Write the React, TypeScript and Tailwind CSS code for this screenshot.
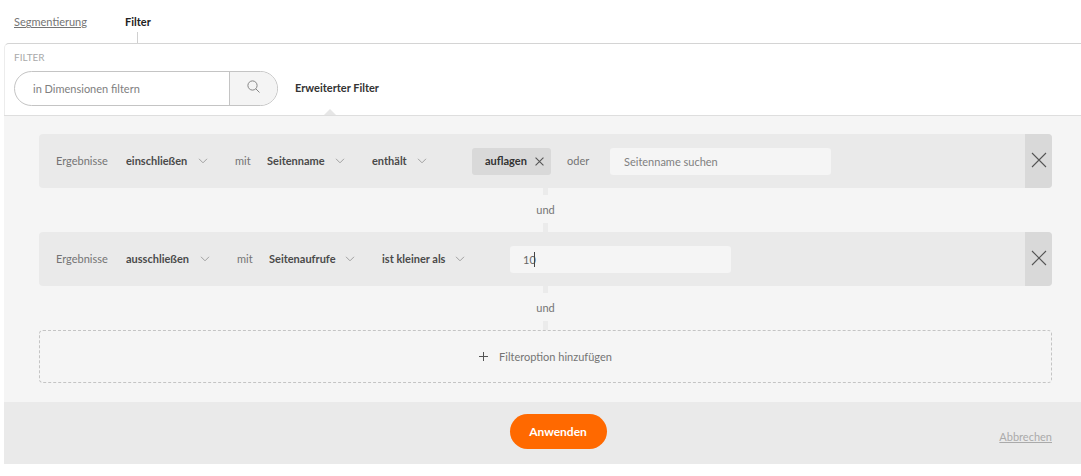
import { useState } from "react";

type Rule = {
	mode: string;
	modeWidth: string;
	dimension: string;
	dimensionWidth: string;
	operator: string;
	operatorWidth: string;
};

const includeRule: Rule = {
	mode: "einschließen",
	modeWidth: "w-[82px]",
	dimension: "Seitenname",
	dimensionWidth: "w-[78px]",
	operator: "enthält",
	operatorWidth: "w-[55px]",
};

const excludeRule: Rule = {
	mode: "ausschließen",
	modeWidth: "w-[84px]",
	dimension: "Seitenaufrufe",
	dimensionWidth: "w-[86px]",
	operator: "ist kleiner als",
	operatorWidth: "w-[83px]",
};

const Cross = ({ className }: { className: string }) => (
	<svg viewBox="0 0 16 16" fill="none" stroke="currentColor" className={className} aria-hidden="true">
		<path d="M1 1l14 14M15 1L1 15" strokeWidth="1.1" vectorEffect="non-scaling-stroke" />
	</svg>
);

const Dropdown = ({ label, value, width }: { label: string; value: string; width: string }) => (
	<div className={`relative shrink-0 ${width}`}>
		<select
			aria-label={label}
			className="block w-full appearance-none bg-transparent font-bold text-[#4a4a4a] outline-none"
		>
			<option>{value}</option>
		</select>
		<svg
			viewBox="0 0 10 6"
			fill="none"
			stroke="#a0a0a0"
			className="pointer-events-none absolute right-0 top-1/2 h-[6px] w-[10px] -translate-y-1/2"
			aria-hidden="true"
		>
			<path d="M1 0.8l4 4 4-4" />
		</svg>
	</div>
);

const RuleRow = ({ rule, children }: { rule: Rule; children: React.ReactNode }) => (
	<div className="flex h-[54px] overflow-hidden rounded-[4px] bg-[#eaeaea]">
		<div className="flex min-w-0 flex-1 items-center pl-[17px]">
			<span className="w-[70px] shrink-0">Ergebnisse</span>
			<Dropdown label="Modus" value={rule.mode} width={rule.modeWidth} />
			<span className="ml-[27px] w-8 shrink-0">mit</span>
			<Dropdown label="Dimension" value={rule.dimension} width={rule.dimensionWidth} />
			<div className="w-[27px] shrink-0" />
			<Dropdown label="Operator" value={rule.operator} width={rule.operatorWidth} />
			<div className="ml-[45px] flex min-w-0 items-center">{children}</div>
		</div>
		<button
			type="button"
			aria-label="Filter entfernen"
			className="flex w-[27px] shrink-0 items-center justify-center bg-[#d9d9d9] pb-[2px] text-[#555]"
		>
			<Cross className="h-4 w-4" />
		</button>
	</div>
);

const AndConnector = () => (
	<div className="flex flex-col items-center">
		<div className="h-[7px] w-[5px] bg-[#ebebeb]" />
		<span className="pb-[5px] pt-[7px] leading-4">und</span>
		<div className="h-[9px] w-[5px] bg-[#ebebeb]" />
	</div>
);

const App = () => {
	const [search, setSearch] = useState("");
	const [page, setPage] = useState("");
	const [count, setCount] = useState("10");

	return (
		<div className="bg-white pl-1 font-[Lato,sans-serif] text-[11px] leading-4 text-[#747474]">
			<nav className="flex h-[43px] pl-[10px] pt-[14px]">
				<a href="#segmentierung" className="w-[111px] underline">
					Segmentierung
				</a>
				<div className="flex flex-col items-center">
					<a href="#filter" className="font-bold text-[#222]">
						Filter
					</a>
					<div className="mt-[2px] w-px flex-1 bg-[#d0d0d0]" />
				</div>
			</nav>

			<section className="rounded-tl-[5px] border-l border-t border-l-[#ececec] border-t-[#d4d4d4] pl-[9px] pt-[5px]">
				<label htmlFor="dimension-search" className="block text-[10px] text-[#aaa]">
					FILTER
				</label>
				<div className="mt-[6px] flex">
					<div className="flex h-[35px] w-[264px] shrink-0 overflow-hidden rounded-full border border-[#c4c4c4]">
						<input
							id="dimension-search"
							type="text"
							placeholder="in Dimensionen filtern"
							value={search}
							onChange={(e) => setSearch(e.target.value)}
							className="min-w-0 flex-1 pl-[18px] text-[11px] outline-none placeholder:text-[#808080]"
						/>
						<button
							type="button"
							aria-label="Suchen"
							className="flex w-12 items-center justify-center border-l border-[#c4c4c4] bg-[#f4f4f4] pb-1"
						>
							<svg viewBox="0 0 13 13" fill="none" stroke="#858585" className="h-[13px] w-[13px]" aria-hidden="true">
								<circle cx="5.5" cy="5.5" r="4.6" />
								<path d="M8.8 8.8l3.7 3.7" />
							</svg>
						</button>
					</div>
					<div className="ml-[17px] flex h-11 flex-col items-start justify-between pt-[9px]">
						<button type="button" className="font-bold text-[#333]">
							Erweiterter Filter
						</button>
						<svg viewBox="0 0 12 6" className="ml-[29px] h-[6px] w-3" aria-hidden="true">
							<path d="M0 6l6-6 6 6z" fill="#e6e6e6" />
						</svg>
					</div>
				</div>
			</section>

			<form onSubmit={(e) => e.preventDefault()}>
				<div className="border-t border-[#dedede] bg-[#f5f5f5] pb-[19px] pl-[35px] pr-[29px] pt-[18px]">
					<RuleRow rule={includeRule}>
						<div className="flex h-[27px] w-[79px] shrink-0 items-center justify-between rounded-[3px] bg-[#d9d9d9] pl-[13px] pr-[7px] font-bold text-[#333]">
							auflagen
							<button type="button" aria-label="auflagen entfernen" className="text-[#555]">
								<Cross className="h-[9px] w-[9px]" />
							</button>
						</div>
						<span className="ml-4 w-[43px] shrink-0">oder</span>
						<input
							type="text"
							aria-label="Seitenname suchen"
							placeholder="Seitenname suchen"
							value={page}
							onChange={(e) => setPage(e.target.value)}
							className="h-[27px] w-[221px] min-w-0 rounded-[3px] bg-[#f5f5f5] pl-[14px] outline-none placeholder:text-[#808080]"
						/>
					</RuleRow>
					<AndConnector />
					<RuleRow rule={excludeRule}>
						<div className="relative">
							<input
								type="text"
								aria-label="Anzahl Seitenaufrufe"
								value={count}
								onChange={(e) => setCount(e.target.value)}
								className="block h-[27px] w-[221px] rounded-[3px] bg-[#f5f5f5] pl-[13px] text-[#666] caret-transparent outline-none"
							/>
							<div className="pointer-events-none absolute left-6 top-[6px] h-[15px] w-px bg-[#444]" />
						</div>
					</RuleRow>
					<AndConnector />
					<button
						type="button"
						className="flex h-[53px] w-full items-center justify-center gap-[11px] rounded-[4px] border border-dashed border-[#c4c4c4]"
					>
						<svg viewBox="0 0 9 9" fill="none" stroke="#555" className="h-[9px] w-[9px]" aria-hidden="true">
							<path d="M4.5 0v9M0 4.5h9" />
						</svg>
						Filteroption hinzufügen
					</button>
				</div>

				<div className="grid h-[62px] grid-cols-[1fr_auto_1fr] items-center bg-[#eaeaea] pb-[3px] pl-[60px] pr-[29px]">
					<button
						type="submit"
						className="col-start-2 h-[35px] w-[97px] rounded-full bg-[#ff6900] text-xs font-bold text-white"
					>
						Anwenden
					</button>
					<a href="#abbrechen" className="mt-[10px] justify-self-end text-[#aaa] underline">
						Abbrechen
					</a>
				</div>
			</form>
		</div>
	);
};

export default App;
